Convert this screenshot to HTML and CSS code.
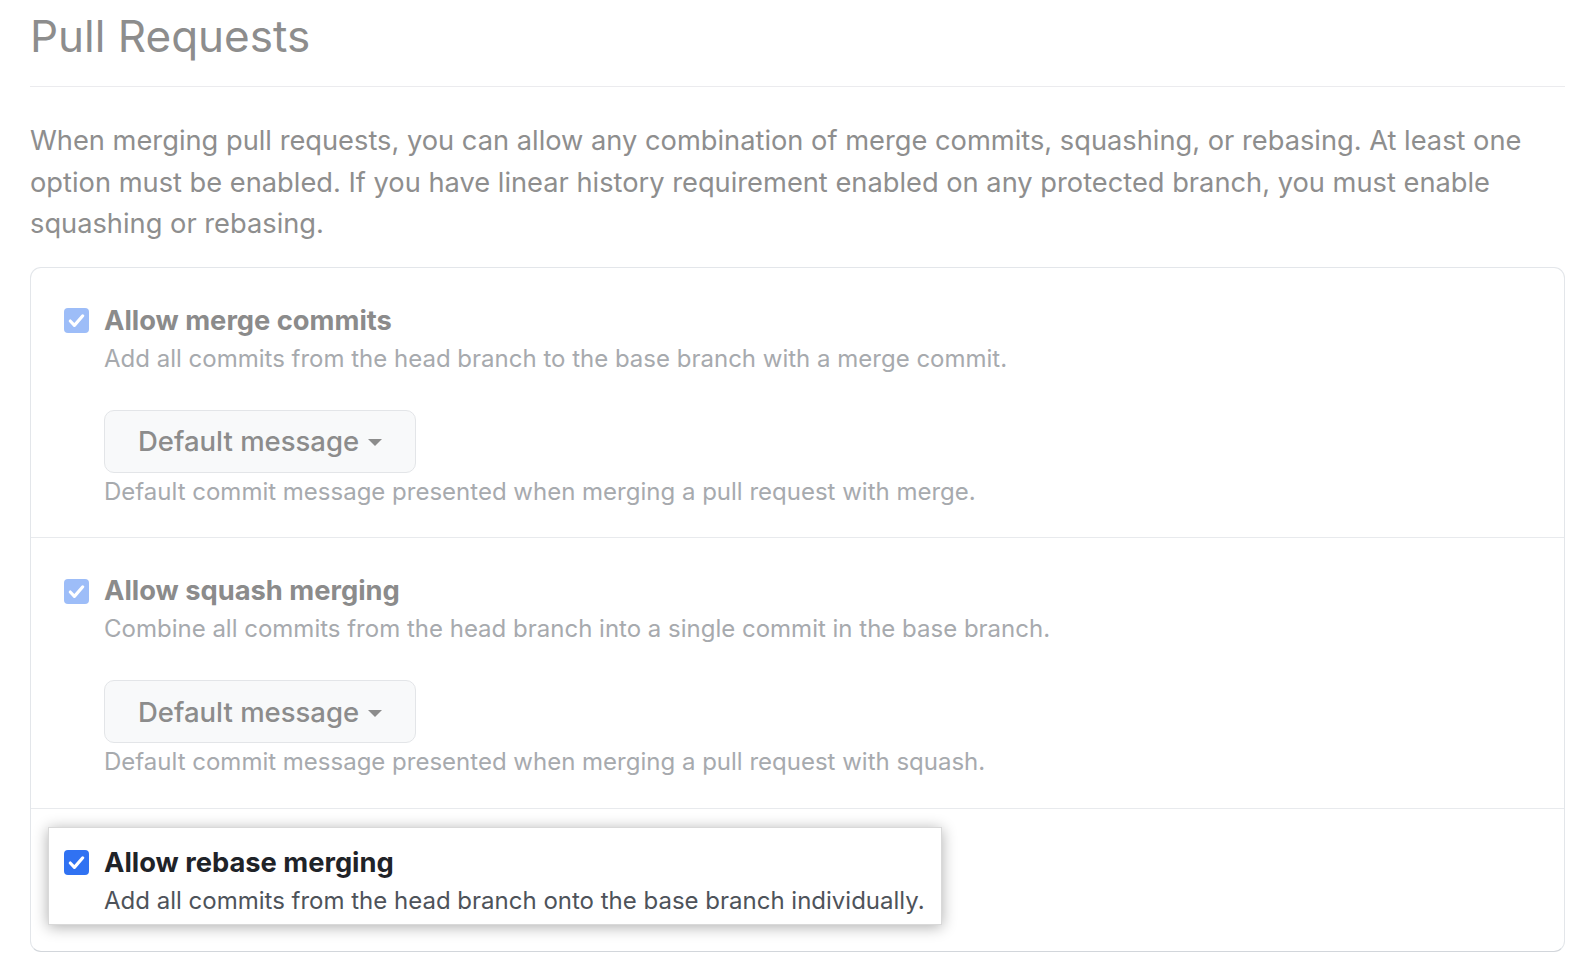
FILE: index.html
```html
<!DOCTYPE html>
<html lang="en">
<head>
<meta charset="utf-8">
<title>Pull Requests</title>
<link rel="stylesheet" href="styles.css">
</head>
<body>
<main class="page">
  <h2 class="subhead">Pull Requests</h2>
  <p class="intro">When merging pull requests, you can allow any combination of merge commits, squashing, or rebasing. At least one option must be enabled. If you have linear history requirement enabled on any protected branch, you must enable squashing or rebasing.</p>

  <div class="card">
    <section class="opt">
      <div class="opt-head">
        <span class="cb cb-faded"><svg viewBox="0 0 24 24" width="25" height="25"><path d="M6 12.5l4 4.2 8-9.2" fill="none" stroke="#fff" stroke-width="3" stroke-linecap="round" stroke-linejoin="round"/></svg></span>
        <span class="opt-title">Allow merge commits</span>
      </div>
      <div class="opt-body">
        <p class="opt-desc">Add all commits from the head branch to the base branch with a merge commit.</p>
        <button class="msg-btn" type="button">Default message<span class="caret"></span></button>
        <p class="opt-help">Default commit message presented when merging a pull request with merge.</p>
      </div>
    </section>

    <section class="opt">
      <div class="opt-head">
        <span class="cb cb-faded"><svg viewBox="0 0 24 24" width="25" height="25"><path d="M6 12.5l4 4.2 8-9.2" fill="none" stroke="#fff" stroke-width="3" stroke-linecap="round" stroke-linejoin="round"/></svg></span>
        <span class="opt-title">Allow squash merging</span>
      </div>
      <div class="opt-body">
        <p class="opt-desc">Combine all commits from the head branch into a single commit in the base branch.</p>
        <button class="msg-btn" type="button">Default message<span class="caret"></span></button>
        <p class="opt-help">Default commit message presented when merging a pull request with squash.</p>
      </div>
    </section>

    <section class="opt opt-last">
      <div class="highlight">
        <div class="opt-head">
          <span class="cb cb-active"><svg viewBox="0 0 24 24" width="25" height="25"><path d="M6 12.5l4 4.2 8-9.2" fill="none" stroke="#fff" stroke-width="3" stroke-linecap="round" stroke-linejoin="round"/></svg></span>
          <span class="opt-title opt-title-dark">Allow rebase merging</span>
        </div>
        <div class="opt-body">
          <p class="opt-desc opt-desc-dark">Add all commits from the head branch onto the base branch individually.</p>
        </div>
      </div>
    </section>
  </div>
</main>
</body>
</html>
```

FILE: styles.css
```css
* { box-sizing: border-box; }

html, body {
  margin: 0;
  padding: 0;
  background: #ffffff;
}

body {
  font-family: Inter, "Liberation Sans", Arial, sans-serif;
  color: #8e8e8e;
}

.page {
  padding: 0 27px 0 30px;
}

.subhead {
  margin: 0;
  padding: 8px 0 22px;
  font-size: 44px;
  line-height: 56px;
  font-weight: 400;
  color: #8d8d8d;
  border-bottom: 1px solid #ebebee;
}

.intro {
  margin: 33px 0 22px;
  font-size: 27.25px;
  line-height: 41.5px;
  color: #8e8e8e;
}

.card {
  border: 1px solid #e3e6ea;
  border-bottom-color: #d2d6db;
  border-radius: 11px;
  background: #fff;
}

.opt {
  padding: 36px 20px 27.5px 33px;
  border-bottom: 1px solid #e8eaed;
}

.opt-last {
  border-bottom: 0;
  padding: 18px 0 26px 17px;
}

.opt-head {
  display: flex;
  align-items: center;
  gap: 15px;
}

.cb {
  flex: none;
  width: 25px;
  height: 25px;
  border-radius: 4px;
  display: flex;
  align-items: center;
  justify-content: center;
}

.cb svg { display: block; }

.cb-faded { background: #9dbdf8; }
.cb-active { background: #3072f2; }

.opt-title {
  font-size: 27.3px;
  line-height: 34px;
  font-weight: 700;
  color: #8b8b8b;
}

.opt-title-dark { color: #1f2328; }

.opt-body {
  padding-left: 40px;
}

.opt-desc {
  margin: 3px 0 0;
  font-size: 24px;
  line-height: 36px;
  color: #a7aaae;
}

.opt-desc-dark { color: #4e535a; }

.msg-btn {
  display: inline-flex;
  align-items: center;
  gap: 9px;
  margin-top: 33px;
  height: 63px;
  padding: 0 33px;
  border: 1px solid #e3e5e8;
  border-radius: 10px;
  background: #f8f9fa;
  font-family: inherit;
  font-size: 27.5px;
  font-weight: 500;
  color: #8c8c8c;
}

.caret {
  width: 0;
  height: 0;
  border-left: 7.5px solid transparent;
  border-right: 7.5px solid transparent;
  border-top: 7px solid #8c8c8c;
  margin-top: 3px;
}

.opt-help {
  margin: 1px 0 0;
  font-size: 24px;
  line-height: 36px;
  color: #a7aaae;
}

.highlight {
  display: inline-block;
  background: #fff;
  border: 1px solid #d9d9d9;
  box-shadow: 0 2px 14px rgba(0, 0, 0, 0.32);
  padding: 18px 16px 5px 15px;
}
```
